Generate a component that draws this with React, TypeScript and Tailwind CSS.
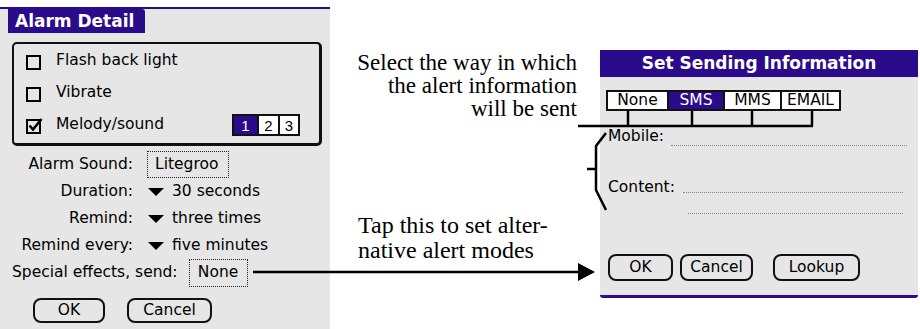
import React from "react";

const palm = { fontFamily: '"DejaVu Sans", Verdana, sans-serif' };
const serif = { fontFamily: '"Liberation Serif", "Times New Roman", serif' };

const Box = ({ checked }: { checked?: boolean }) => (
  <svg width="17" height="17" viewBox="0 0 17 17" className="shrink-0">
    <rect x="1" y="3" width="13" height="13" fill="none" stroke="#000" strokeWidth="2" />
    {checked && <path d="M3.5 8.5 L7 12.5 L15.5 2" fill="none" stroke="#000" strokeWidth="2.6" />}
  </svg>
);

const Triangle = () => (
  <svg width="16" height="8" viewBox="0 0 16 8" className="shrink-0 mr-[8px]">
    <polygon points="0,0 16,0 8,8" fill="#000" />
  </svg>
);

const PalmButton = ({ label, w }: { label: string; w: string }) => (
  <div className={`${w} h-full flex items-center justify-center border-2 border-[#111] rounded-[8px]`}>
    {label}
  </div>
);

const Row = ({ label, children }: { label: string; children: React.ReactNode }) => (
  <div className="flex h-[27px] items-center">
    <div className="w-[133px] text-right">{label}</div>
    <div className="ml-[15px] flex items-center h-full">{children}</div>
  </div>
);

export default function App() {
  return (
    <div className="relative w-[920px] h-[329px] bg-white flex overflow-hidden text-black">
      {/* Alarm detail form */}
      <div
        className="mt-[7px] w-[330px] h-[322px] bg-[#e6e6e6] border-t-2 border-[#2a0b8b] text-[15.5px] leading-none flex flex-col"
        style={palm}
      >
        <div className="ml-[8px] w-[137px] h-[24px] bg-[#2a0b8b] rounded-tr-[3px] text-white font-bold text-[17px] flex items-center pl-[7px]">
          Alarm Detail
        </div>

        <div className="mt-[9px] ml-[12px] w-[310px] h-[104px] border-2 border-r-[3px] border-b-[3px] border-[#111] rounded-[5px] pt-[1px] pl-[12px]">
          <div className="h-[32px] flex items-center gap-[13px]">
            <Box />
            <span>Flash back light</span>
          </div>
          <div className="h-[32px] flex items-center gap-[13px]">
            <Box />
            <span>Vibrate</span>
          </div>
          <div className="h-[32px] flex items-center gap-[13px]">
            <Box checked />
            <span>Melody/sound</span>
            <div className="ml-auto mr-[19px] flex h-[22px] border-2 border-[#111] text-[15px]" style={{ fontFamily: '"Liberation Sans", Arial, sans-serif' }}>
              <div className="w-[23px] bg-[#2a0b8b] text-white flex items-center justify-center">1</div>
              <div className="w-[21px] bg-white border-l-2 border-[#111] flex items-center justify-center">2</div>
              <div className="w-[20px] bg-white border-l-2 border-[#111] flex items-center justify-center">3</div>
            </div>
          </div>
        </div>

        <div className="mt-[5px] flex flex-col">
          <Row label="Alarm Sound:">
            <div className="-ml-[1px] h-[27px] w-[82px] border border-dotted border-[#222] flex items-center pl-[7px]">
              Litegroo
            </div>
          </Row>
          <Row label="Duration:">
            <Triangle />
            30 seconds
          </Row>
          <Row label="Remind:">
            <Triangle />
            three times
          </Row>
          <Row label="Remind every:">
            <Triangle />
            five minutes
          </Row>
          <div className="flex h-[27px] items-center pl-[12px]">
            <span>Special effects, send:</span>
            <div className="ml-[11px] h-[28px] w-[59px] border border-dotted border-[#222] flex items-center justify-center">
              None
            </div>
          </div>
        </div>

        <div className="mt-[12px] h-[25px] flex pl-[33px] gap-[22px]">
          <PalmButton label="OK" w="w-[72px]" />
          <PalmButton label="Cancel" w="w-[85px]" />
        </div>
      </div>

      {/* annotations */}
      <div className="w-[270px] flex flex-col" style={serif}>
        <div className="mt-[51px] pr-[23px] text-right text-[23px] leading-[23px]">
          Select the way in which
          <br />
          the alert information
          <br />
          will be sent
        </div>
        <div className="mt-[93px] pl-[28px] text-[24px] leading-[25px]">
          Tap this to set alter-
          <br />
          native alert modes
        </div>
      </div>

      {/* Set sending information dialog */}
      <div
        className="mt-[50px] w-[318px] h-[248px] bg-[#e6e6e6] border-b-[3px] border-[#2a0b8b] rounded-b-[3px] flex flex-col text-[15.5px] leading-none"
        style={palm}
      >
        <div className="h-[27px] bg-[#2a0b8b] text-white font-bold text-[17px] flex items-center justify-center">
          Set Sending Information
        </div>

        <div className="mt-[13px] ml-[6px] flex h-[21px] border-2 border-[#111] self-start">
          <div className="w-[59px] bg-white flex items-center justify-center">None</div>
          <div className="w-[56px] bg-[#2a0b8b] text-white border-l-2 border-[#111] flex items-center justify-center">SMS</div>
          <div className="w-[57px] bg-white border-l-2 border-[#111] flex items-center justify-center">MMS</div>
          <div className="w-[59px] bg-white border-l-2 border-[#111] flex items-center justify-center">EMAIL</div>
        </div>

        <div className="mt-[15px] h-[22px] flex items-end pl-[8px]">
          <span className="h-[22px] flex items-center">Mobile:</span>
          <div className="ml-[7px] mr-[11px] mb-[2px] flex-1 border-b border-dotted border-[#888]" />
        </div>

        <div className="mt-[29px] h-[22px] flex items-end pl-[8px]">
          <span className="h-[22px] flex items-center">Content:</span>
          <div className="ml-[8px] mr-[15px] mb-[6px] flex-1 border-b border-dotted border-[#888]" />
        </div>

        <div className="mt-[14px] ml-[88px] mr-[15px] border-b border-dotted border-[#888]" />

        <div className="mt-[40px] h-[27px] flex pl-[8px]">
          <PalmButton label="OK" w="w-[65px]" />
          <div className="w-[7px]" />
          <PalmButton label="Cancel" w="w-[73px]" />
          <div className="w-[20px]" />
          <PalmButton label="Lookup" w="w-[87px]" />
        </div>
      </div>

      {/* connector lines */}
      <svg className="absolute inset-0 pointer-events-none" width="920" height="329" viewBox="0 0 920 329">
        <g stroke="#000" strokeWidth="2.5" fill="none">
          <line x1="253" y1="272" x2="582" y2="272" />
          <line x1="578" y1="126" x2="813" y2="126" />
          <line x1="628" y1="111" x2="628" y2="126" />
          <line x1="692" y1="111" x2="692" y2="126" />
          <line x1="752" y1="111" x2="752" y2="126" />
          <line x1="812" y1="111" x2="812" y2="126" />
          <polyline points="606,133 596,146 596,190 606,210" />
          <line x1="587" y1="169" x2="596" y2="169" />
        </g>
        <polygon points="578,263 595,272 578,281" fill="#000" />
      </svg>
    </div>
  );
}
